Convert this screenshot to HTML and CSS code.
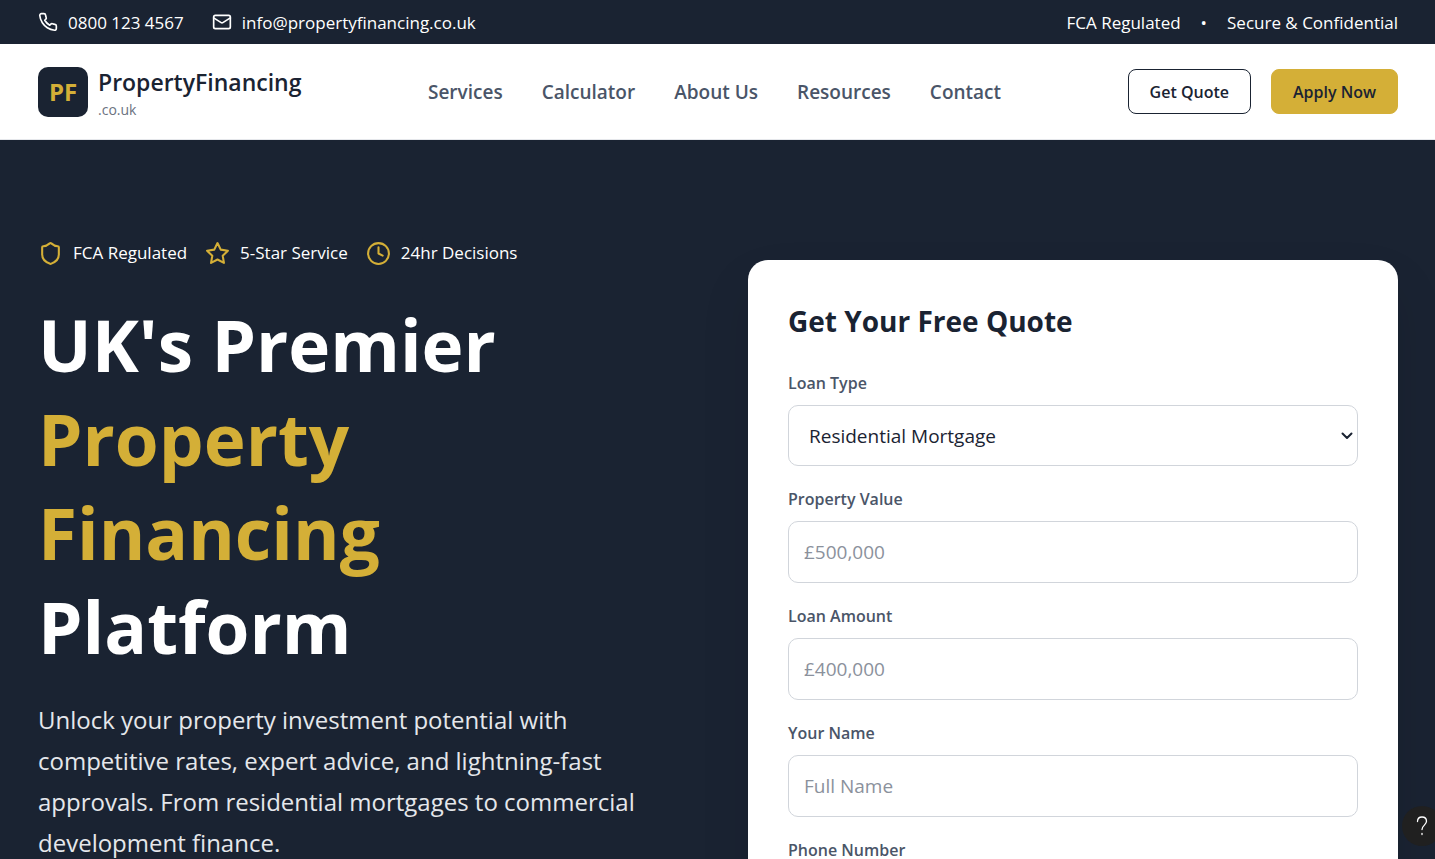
FILE: index.html
```html
<!DOCTYPE html>
<html lang="en">
<head>
    <meta charset="UTF-8">
    <meta name="viewport" content="width=device-width, initial-scale=1.0">
    <title>PropertyFinancing.co.uk</title>
    <link rel="stylesheet" href="styles.css">
</head>
<body>
    <div class="top-bar">
        <div class="top-contact">
            <a href="tel:08001234567">
                <svg class="icon-small" viewBox="0 0 24 24"><path d="M22 16.92v3a2 2 0 0 1-2.18 2 19.79 19.79 0 0 1-8.63-3.07 19.5 19.5 0 0 1-6-6 19.79 19.79 0 0 1-3.07-8.67A2 2 0 0 1 4.11 2h3a2 2 0 0 1 2 1.72 12.84 12.84 0 0 0 .7 2.81 2 2 0 0 1-.45 2.11L8.09 9.91a16 16 0 0 0 6 6l1.27-1.27a2 2 0 0 1 2.11-.45 12.84 12.84 0 0 0 2.81.7A2 2 0 0 1 22 16.92z"/></svg>
                0800 123 4567
            </a>
            <a href="mailto:info@propertyfinancing.co.uk">
                <svg class="icon-small" viewBox="0 0 24 24"><rect x="2" y="4" width="20" height="16" rx="2"/><path d="m22 7-8.97 5.7a1.94 1.94 0 0 1-2.06 0L2 7"/></svg>
                info@propertyfinancing.co.uk
            </a>
        </div>
        <div class="top-notes">
            <span>FCA Regulated</span>
            <span>•</span>
            <span>Secure &amp; Confidential</span>
        </div>
    </div>

    <header class="header">
        <a class="logo" href="#">
            <span class="logo-mark">PF</span>
            <span class="logo-text">
                <span class="logo-name">PropertyFinancing</span>
                <span class="logo-domain">.co.uk</span>
            </span>
        </a>
        <nav class="nav">
            <a href="#">Services</a>
            <a href="#">Calculator</a>
            <a href="#">About Us</a>
            <a href="#">Resources</a>
            <a href="#">Contact</a>
        </nav>
        <div class="header-buttons">
            <button class="btn btn-outline">Get Quote</button>
            <button class="btn btn-gold">Apply Now</button>
        </div>
    </header>

    <main class="hero">
        <div class="hero-content">
            <div class="badges">
                <span class="badge">
                    <svg class="icon" viewBox="0 0 24 24"><path d="M20 13c0 5-3.5 7.5-7.66 8.95a1 1 0 0 1-.67-.01C7.5 20.5 4 18 4 13V6a1 1 0 0 1 1-1c2 0 4.5-1.2 6.24-2.72a1.17 1.17 0 0 1 1.52 0C14.51 3.81 17 5 19 5a1 1 0 0 1 1 1z"/></svg>
                    FCA Regulated
                </span>
                <span class="badge">
                    <svg class="icon" viewBox="0 0 24 24"><polygon points="12 2 15.09 8.26 22 9.27 17 14.14 18.18 21.02 12 17.77 5.82 21.02 7 14.14 2 9.27 8.91 8.26 12 2"/></svg>
                    5-Star Service
                </span>
                <span class="badge">
                    <svg class="icon" viewBox="0 0 24 24"><circle cx="12" cy="12" r="10"/><polyline points="12 6 12 12 16 14"/></svg>
                    24hr Decisions
                </span>
            </div>
            <h1>UK's Premier <span class="gold">Property Financing</span> Platform</h1>
            <p class="lead">Unlock your property investment potential with competitive rates, expert advice, and lightning-fast approvals. From residential mortgages to commercial development finance.</p>
        </div>

        <form class="quote-card">
            <h2>Get Your Free Quote</h2>
            <div class="field">
                <label for="loanType">Loan Type</label>
                <div class="select-wrap">
                    <select id="loanType">
                        <option>Residential Mortgage</option>
                    </select>
                    <svg class="select-arrow" viewBox="0 0 12 8"><path d="M1.500 1.500 6 6l4.500-4.500"/></svg>
                </div>
            </div>
            <div class="field">
                <label for="propertyValue">Property Value</label>
                <input type="text" id="propertyValue" placeholder="£500,000">
            </div>
            <div class="field">
                <label for="loanAmount">Loan Amount</label>
                <input type="text" id="loanAmount" placeholder="£400,000">
            </div>
            <div class="field">
                <label for="fullName">Your Name</label>
                <input type="text" id="fullName" placeholder="Full Name">
            </div>
            <div class="field">
                <label for="phone">Phone Number</label>
                <input type="tel" id="phone">
            </div>
        </form>
    </main>

    <button class="help-button" aria-label="Help">
        <svg viewBox="0 0 24 24"><path d="M7.500 7.500C7.500 4.500 9.500 3 12 3s4.500 1.600 4.500 4.300c0 3.700-4.500 4-4.500 8.200"/><path d="M12 19.500v1"/></svg>
    </button>
</body>
</html>
```
FILE: styles.css
```css
* {
    box-sizing: border-box;
}
body {
    margin: 0;
    font-family: "Segoe UI", "Open Sans", "Noto Sans", sans-serif;
    font-size: 20px;
    color: #1a2332;
    background-color: #fff;
}
a {
    color: inherit;
    text-decoration: none;
}
h1, h2, p {
    margin: 0;
}
svg {
    fill: none;
    stroke: currentColor;
    stroke-width: 2;
    stroke-linecap: round;
    stroke-linejoin: round;
    flex-shrink: 0;
}
button, input, select {
    font-family: inherit;
}

.top-bar {
    display: flex;
    justify-content: space-between;
    align-items: center;
    height: 44px;
    padding: 0 37px 0 38px;
    background-color: #1a2332;
    color: #fff;
    font-size: 17px;
}
.top-contact {
    display: flex;
    gap: 28px;
}
.top-contact a {
    display: flex;
    align-items: center;
    gap: 10px;
}
.top-notes {
    display: flex;
    gap: 20px;
}
.icon-small {
    width: 20px;
    height: 20px;
}

.header {
    display: flex;
    justify-content: space-between;
    align-items: center;
    height: 96px;
    padding: 0 37px 0 38px;
    border-bottom: 1px solid #e5e7eb;
}
.logo {
    display: flex;
    align-items: center;
    gap: 10px;
}
.logo-mark {
    display: flex;
    align-items: center;
    justify-content: center;
    width: 50px;
    height: 50px;
    border-radius: 10px;
    background-color: #1a2332;
    color: #d4af37;
    font-size: 24px;
    font-weight: 700;
}
.logo-text {
    display: flex;
    flex-direction: column;
}
.logo-name {
    font-size: 23px;
    font-weight: 600;
    line-height: 36px;
}
.logo-domain {
    font-size: 14px;
    line-height: 20px;
    color: #6b7280;
}
.nav {
    display: flex;
    gap: 39px;
    color: #4a5568;
    font-size: 19px;
    font-weight: 600;
}
.header-buttons {
    display: flex;
    gap: 20px;
}
.btn {
    height: 45px;
    padding: 0 21px;
    border: 1px solid #1a2332;
    border-radius: 8px;
    background-color: #fff;
    color: #1a2332;
    font-size: 16px;
    font-weight: 600;
    cursor: pointer;
}
.btn-gold {
    background-color: #d4af37;
    border-color: #d4af37;
}

.hero {
    display: grid;
    grid-template-columns: 1fr 1fr;
    align-items: start;
    gap: 60px;
    padding: 100px 37px 100px 38px;
    background-color: #1a2332;
    color: #fff;
}
.badges {
    display: flex;
    gap: 18px;
    margin-bottom: 32px;
    font-size: 17px;
}
.badge {
    display: flex;
    align-items: center;
    gap: 10px;
    line-height: 26px;
}
.icon {
    width: 25px;
    height: 25px;
    color: #d4af37;
}
h1 {
    font-size: 71px;
    font-weight: 700;
    line-height: 94px;
    margin-bottom: 25px;
}
.gold {
    color: #d4af37;
}
.lead {
    font-size: 24px;
    line-height: 41px;
    color: #e5e7eb;
}

.quote-card {
    margin-top: 20px;
    padding: 40px;
    border-radius: 20px;
    background-color: #fff;
    color: #1a2332;
    box-shadow: 0 25px 50px rgba(0, 0, 0, 0.1);
}
h2 {
    font-size: 28px;
    font-weight: 700;
    line-height: 42px;
    margin-bottom: 28px;
}
.field {
    margin-bottom: 20px;
}
.field label {
    display: block;
    margin-bottom: 8px;
    font-size: 16px;
    font-weight: 600;
    line-height: 27px;
    color: #4a5568;
}
.field input,
.field select {
    display: block;
    width: 100%;
    height: 62px;
    padding: 0 15px;
    border: 1px solid #d1d5db;
    border-radius: 10px;
    background-color: #fff;
    color: #1a2332;
    font-size: 19px;
}
.select-wrap {
    position: relative;
}
.field select {
    height: 61px;
    padding: 0 20px;
    appearance: none;
}
.select-arrow {
    position: absolute;
    right: 5px;
    top: 27px;
    width: 12px;
    height: 8px;
    pointer-events: none;
}
.field input::placeholder {
    color: #8b919c;
}

.help-button {
    position: fixed;
    right: -7px;
    bottom: 13px;
    display: flex;
    align-items: center;
    justify-content: center;
    width: 40px;
    height: 40px;
    padding: 0;
    border: none;
    border-radius: 50%;
    background-color: #202020;
    color: #fff;
    cursor: pointer;
}
.help-button svg {
    width: 24px;
    height: 24px;
    stroke-width: 1.3;
}
```
